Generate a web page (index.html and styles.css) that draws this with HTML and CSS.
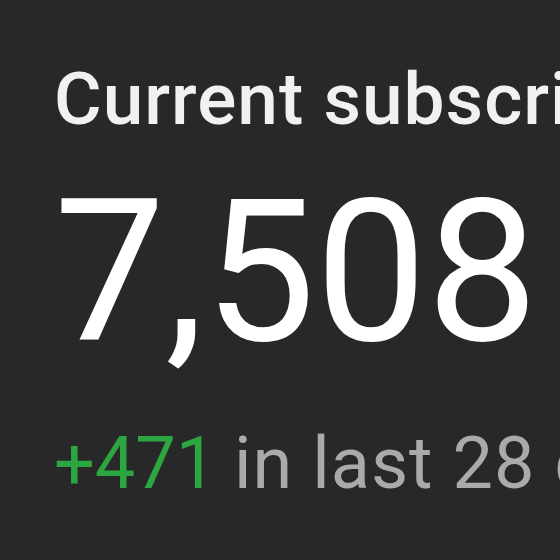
FILE: index.html
```html
<!DOCTYPE html>
<html>
<head>
<meta charset="utf-8">
<link rel="stylesheet" href="styles.css">
</head>
<body>
<div class="card">
  <div class="title">Current subscribers</div>
  <div class="value">7,508</div>
  <div class="change"><span class="up">+471</span> <span class="period">in last 28 days</span></div>
</div>
</body>
</html>
```
FILE: styles.css
```css
html, body {
  margin: 0;
  padding: 0;
  background: #282828;
  width: 560px;
  height: 560px;
  overflow: hidden;
}
.card {
  padding: 56px 0 0 54px;
  font-family: Roboto, "Liberation Sans", sans-serif;
  white-space: nowrap;
  display: flex;
  flex-direction: column;
}
.title {
  color: #f1f1f1;
  font-size: 73px;
  font-weight: 500;
  line-height: 86px;
  letter-spacing: 1px;
}
.value {
  color: #ffffff;
  font-size: 198px;
  font-weight: 400;
  line-height: 230px;
  margin-top: 15px;
}
.change {
  color: #aaaaaa;
  font-size: 72px;
  line-height: 86px;
  margin-top: 34px;
}
.up {
  color: #2ba640;
}
.period {
  letter-spacing: 1px;
}
```
